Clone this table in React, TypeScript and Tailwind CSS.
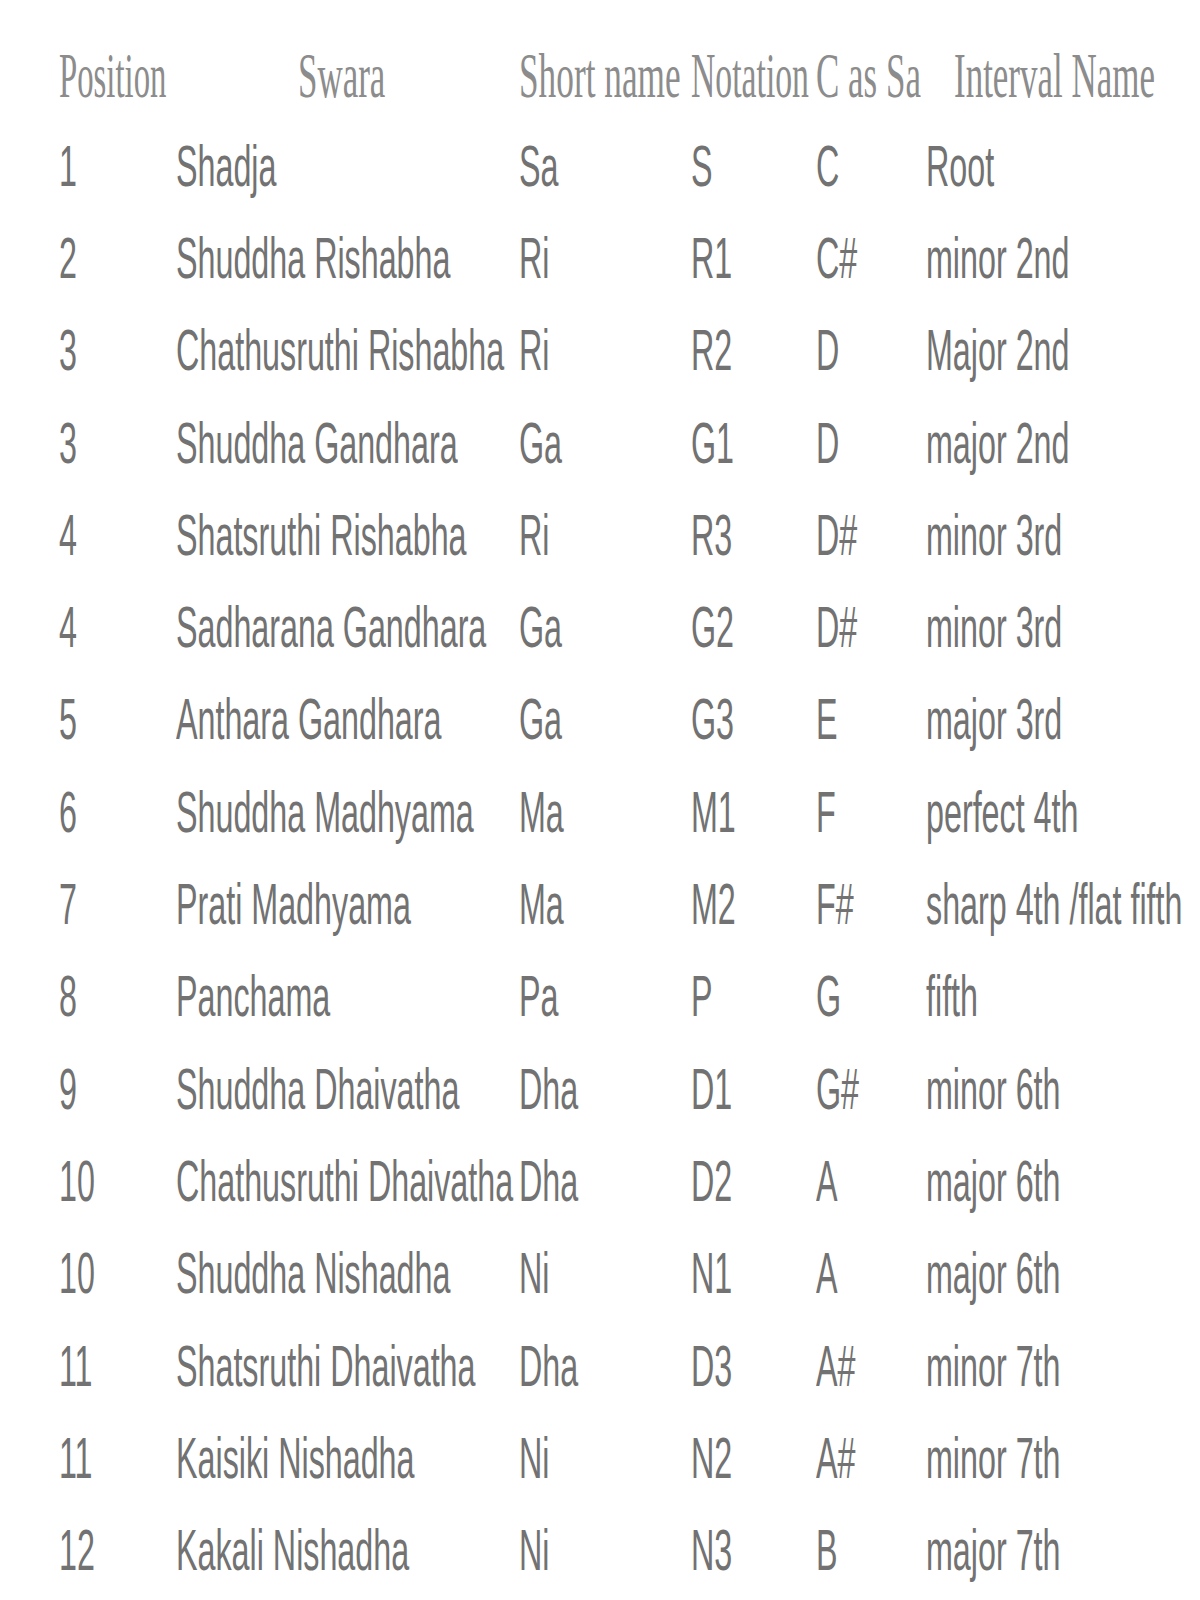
const rows = [
  ["1", "Shadja", "Sa", "S", "C", "Root"],
  ["2", "Shuddha Rishabha", "Ri", "R1", "C#", "minor 2nd"],
  ["3", "Chathusruthi Rishabha", "Ri", "R2", "D", "Major 2nd"],
  ["3", "Shuddha Gandhara", "Ga", "G1", "D", "major 2nd"],
  ["4", "Shatsruthi Rishabha", "Ri", "R3", "D#", "minor 3rd"],
  ["4", "Sadharana Gandhara", "Ga", "G2", "D#", "minor 3rd"],
  ["5", "Anthara Gandhara", "Ga", "G3", "E", "major 3rd"],
  ["6", "Shuddha Madhyama", "Ma", "M1", "F", "perfect 4th"],
  ["7", "Prati Madhyama", "Ma", "M2", "F#", "sharp 4th /flat fifth"],
  ["8", "Panchama", "Pa", "P", "G", "fifth"],
  ["9", "Shuddha Dhaivatha", "Dha", "D1", "G#", "minor 6th"],
  ["10", "Chathusruthi Dhaivatha", "Dha", "D2", "A", "major 6th"],
  ["10", "Shuddha Nishadha", "Ni", "N1", "A", "major 6th"],
  ["11", "Shatsruthi Dhaivatha", "Dha", "D3", "A#", "minor 7th"],
  ["11", "Kaisiki Nishadha", "Ni", "N2", "A#", "minor 7th"],
  ["12", "Kakali Nishadha", "Ni", "N3", "B", "major 7th"],
];

const cols = "grid grid-cols-[116.5px_343px_172.4px_125.5px_109.2px_1fr]";

const headText =
  "inline-block origin-left text-[63px] leading-none text-[#8c8c8c] font-['Liberation_Serif',serif]";
const bodyText =
  "inline-block origin-left scale-x-[0.566] text-[57px] leading-none text-[#727272] font-['Liberation_Sans',Arial,sans-serif]";

function Cell({ text, head, pad = "", sx = "scale-x-[0.555]" }: { text: string; head?: boolean; pad?: string; sx?: string }) {
  return (
    <div className={`flex items-center h-full min-w-0 whitespace-nowrap overflow-hidden ${pad}`}>
      <div className={head ? `${headText} ${sx}` : bodyText}>{text}</div>
    </div>
  );
}

export default function App() {
  return (
    <div className="w-full h-screen bg-white overflow-hidden pt-[32px] pl-[59px]">
      <div className={`${cols} h-[88px]`}>
        <Cell text="Position" head sx="scale-x-[0.52]" />
        <Cell text="Swara" head pad="pl-[122px]" />
        <Cell text="Short  name" head sx="scale-x-[0.56]" />
        <Cell text="Notation" head sx="scale-x-[0.535]" />
        <Cell text="C as Sa" head />
        <Cell text="Interval Name" head pad="pl-[28px]" />
      </div>
      {rows.map((r, i) => (
        <div key={i} className={`${cols} h-[92.3px]`}>
          {r.map((t, j) => (
            <Cell key={j} text={t} />
          ))}
        </div>
      ))}
    </div>
  );
}
